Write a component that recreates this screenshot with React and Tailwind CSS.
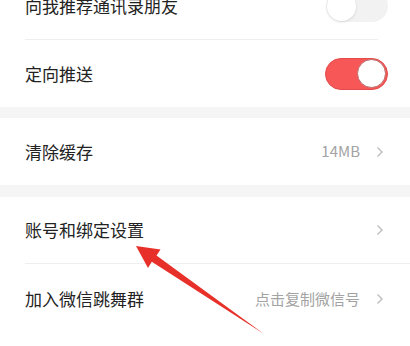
import React from 'react';

const font = { fontFamily: '"Noto Sans CJK SC", "Liberation Sans", sans-serif' };

function Chevron() {
    return (
        <svg width="8" height="12" viewBox="0 0 8 12" className="ml-[16px]">
            <path d="M1.5 1.5 L6 6 L1.5 10.5" fill="none" stroke="#bdbdbd" strokeWidth="1.4" />
        </svg>
    );
}

function Toggle({ on }) {
    if (on) {
        return (
            <div className="w-[63px] h-[32px] rounded-full bg-[#f75757] border border-[#e34c4c] flex items-center justify-end pr-[1px]">
                <div className="w-[29px] h-[29px] rounded-full bg-white border border-[#b96a6a]" />
            </div>
        );
    }
    return (
        <div className="w-[62px] h-[32px] rounded-full bg-[#f2f2f2] flex items-center pl-[1px]">
            <div className="w-[29px] h-[29px] rounded-full bg-white shadow-[0_1px_3px_rgba(0,0,0,0.12)]" />
        </div>
    );
}

function Row({ label, h, right }) {
    return (
        <div className={`flex items-center justify-between pl-[25px] pr-[22px] bg-white ${h}`}>
            <span className="text-[17px] text-[#222]">{label}</span>
            <div className="flex items-center">{right}</div>
        </div>
    );
}

export default function App() {
    return (
        <div className="relative w-[410px] h-[346px] overflow-hidden bg-white" style={font}>
            <div className="mt-[-27px]">
                <Row label="向我推荐通讯录朋友" h="h-[66px]" right={<Toggle on={false} />} />
                <div className="h-px bg-[#efefef] ml-[25px] mr-[32px]" />
                <Row label="定向推送" h="h-[67px]" right={<Toggle on />} />
                <div className="h-[11px] bg-[#f5f5f5]" />
                <Row
                    label="清除缓存"
                    h="h-[67px]"
                    right={<><span className="text-[15px] text-[#a3a3a3]">14MB</span><div className="pr-[4px]"><Chevron /></div></>}
                />
                <div className="h-[12px] bg-[#f5f5f5]" />
                <Row label="账号和绑定设置" h="h-[66px]" right={<div className="pr-[4px]"><Chevron /></div>} />
                <div className="h-px bg-[#efefef] ml-[25px]" />
                <Row
                    label="加入微信跳舞群"
                    h="h-[70px]"
                    right={<><span className="text-[15px] text-[#a3a3a3]">点击复制微信号</span><div className="pr-[4px]"><Chevron /></div></>}
                />
            </div>
            <svg className="absolute left-0 top-0" width="410" height="346" viewBox="0 0 410 346">
                <polygon
                    points="136,246 160.5,249.5 156.5,255.5 264,334 151.8,261.8 148,268"
                    fill="#e8302a"
                />
            </svg>
        </div>
    );
}
